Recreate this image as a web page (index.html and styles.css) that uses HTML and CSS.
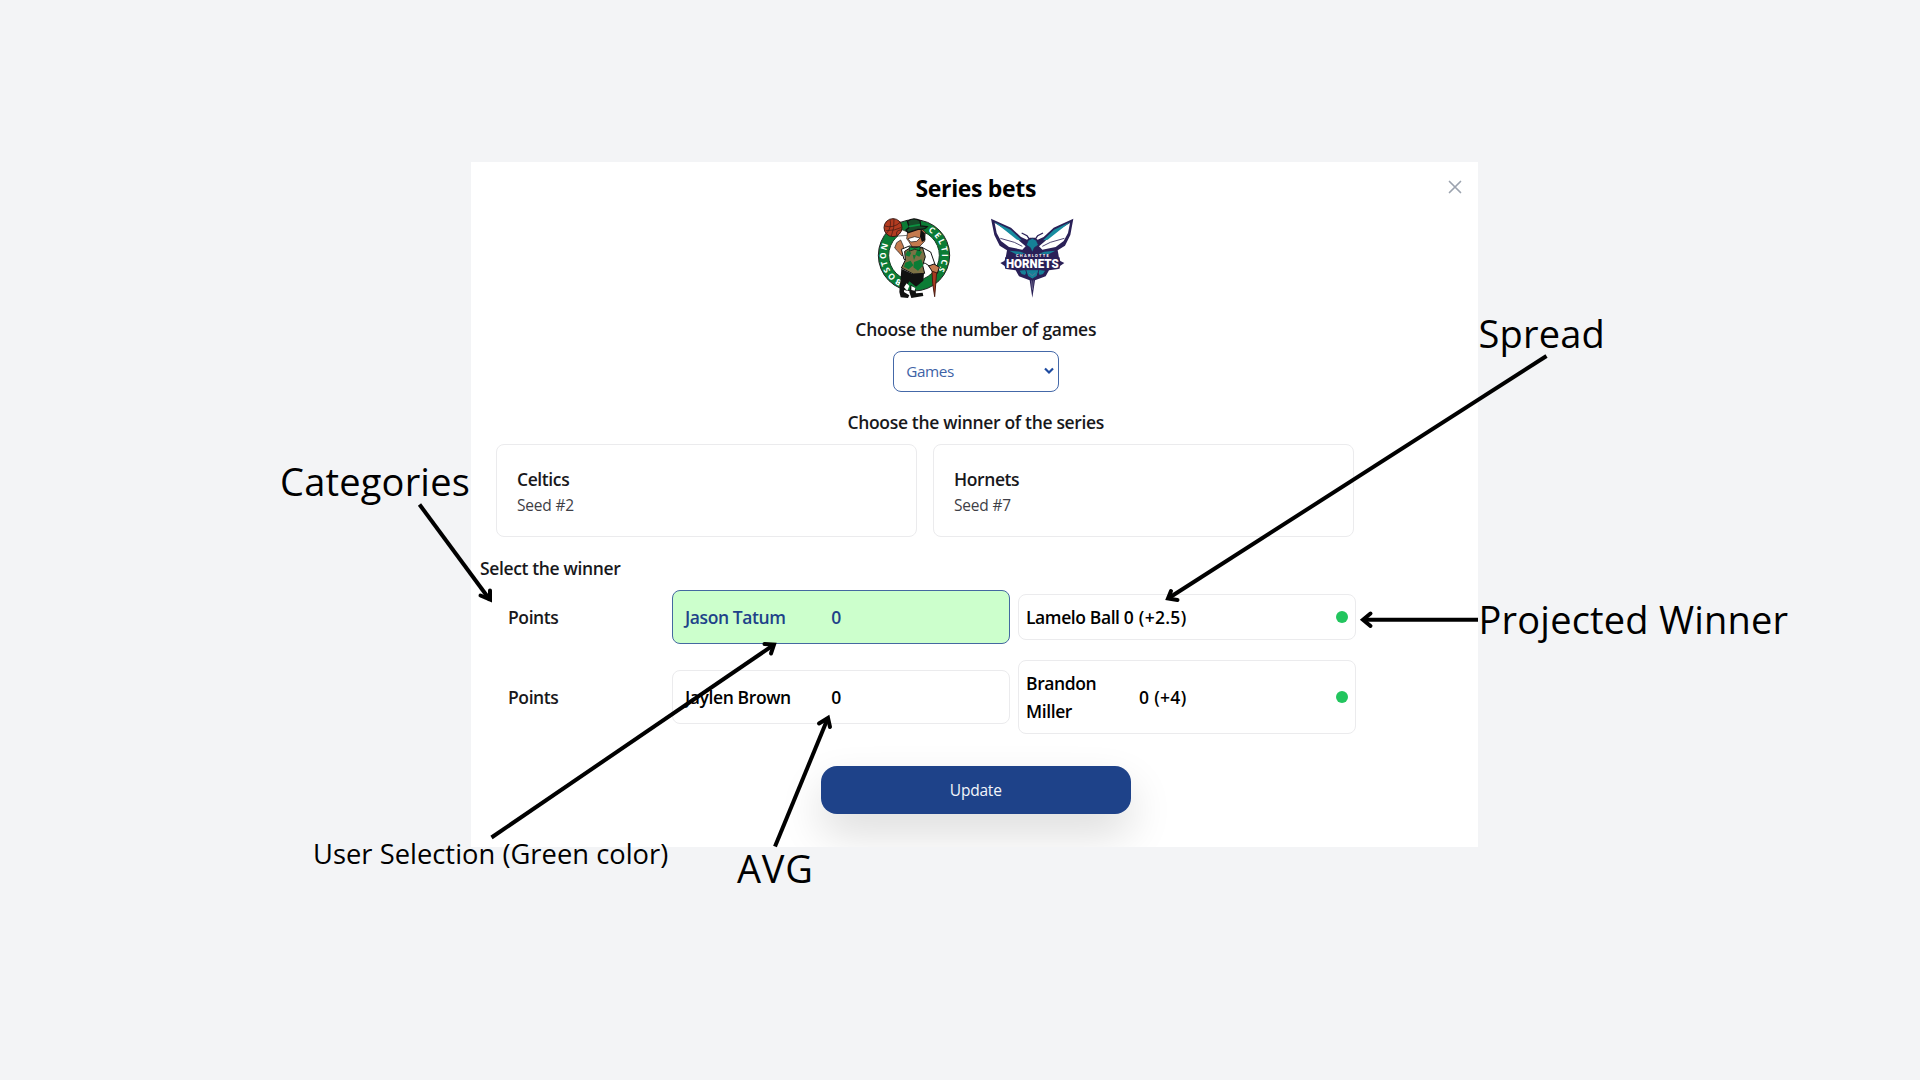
FILE: index.html
```html
<!DOCTYPE html>
<html lang="en">
<head>
<meta charset="utf-8">
<title>Series bets</title>
<link rel="stylesheet" href="styles.css">
</head>
<body>
<main class="modal">
  <button class="close" aria-label="Close">
    <svg width="14" height="14" viewBox="0 0 14 14"><path d="M1.5 1.5l11 11M12.5 1.5l-11 11"/></svg>
  </button>
  <h1 class="title">Series bets</h1>
  <div class="logos">
    <svg width="85" height="90" viewBox="0 0 255 270">
      <circle cx="126" cy="130" r="107" fill="#0b7c35" stroke="#222" stroke-width="3"/>
      <circle cx="126" cy="130" r="76" fill="#fff" stroke="#173f25" stroke-width="3"/>
      <path id="ring" fill="none" d="M126 214A84 84 0 0 1 126 46A84 84 0 0 1 126 214"/>
      <text class="ring-text"><textPath href="#ring" startOffset="36" textLength="130">BOSTON</textPath></text>
      <text class="ring-text"><textPath href="#ring" startOffset="307" textLength="135">CELTICS</textPath></text>
      <path d="M72 58L92 54L112 62L108 70L78 72Z" fill="#fff" stroke="#333" stroke-width="2"/>
      <path d="M74 92L86 84L94 102L98 124L90 132L76 116L68 108Z" fill="#c47a4e" stroke="#111" stroke-width="2"/>
      <path d="M88 112L112 102L150 106L176 120L190 160L178 166L160 154L96 142Z" fill="#fff" stroke="#111" stroke-width="3"/>
      <path d="M98 118L120 104L152 108L160 134L152 160L158 184L124 186L88 168L100 144Z" fill="#7d7145" stroke="#111" stroke-width="3"/>
      <path d="M106 116l12 6-6 12-12-4zM136 112l14 8-8 14-12-6zM100 152l16-6 8 14-14 12-14-8zM126 150l22-8 6 18-16 16-14-10zM122 128l10 2-6 14z" fill="#0b7c35"/>
      <path d="M108 52L140 44L160 60L158 88L142 104L120 104L110 88L104 80Z" fill="#c47a4e" stroke="#111" stroke-width="2"/>
      <path d="M108 80l20-6 16 4-10 10-18 2z" fill="#fff" stroke="#111" stroke-width="2"/>
      <path d="M146 52L158 64L160 84L150 90L144 74Z" fill="#111"/>
      <path d="M106 28Q124 14 144 26L146 42L166 44Q158 54 138 52L108 62L102 54L112 46Z" fill="#164d2a" stroke="#111" stroke-width="4"/>
      <path d="M110 44L144 38" stroke="#0b9040" stroke-width="5"/>
      <path d="M112 104L128 108L144 104L144 116L128 112L112 118Z" fill="#0b9040" stroke="#111" stroke-width="2"/>
      <path d="M88 170L122 186L156 184L154 206L132 224L112 208L98 234L84 222Z" fill="#111"/>
      <path d="M84 212L98 216L96 240L112 250L108 258L86 256L82 240Z" fill="#111"/>
      <path d="M116 218L130 228L132 244L152 242L154 252L118 258L112 240Z" fill="#111"/>
      <path d="M96 226l8-12 8 8-6 14zM118 222l12 6-2 8-10-2z" fill="#fff"/>
      <path d="M170 162L186 156L202 166L196 184L182 180Z" fill="#c47a4e" stroke="#111" stroke-width="3"/>
      <path d="M180 178L194 182L188 254L182 214Z" fill="#a83a20" stroke="#4a1c12" stroke-width="3"/>
      <circle cx="63" cy="47" r="27" fill="#b23b20" stroke="#3a1712" stroke-width="3"/>
      <path d="M38 42Q64 50 86 30M44 64Q60 46 54 22M58 72Q68 48 66 20M42 56Q70 56 89 46M74 70Q70 54 88 54" fill="none" stroke="#3a1712" stroke-width="2"/>
    </svg>
    <svg width="90" height="87" viewBox="380 30 270 261">
      <path d="M392 41L452 68L482 96L500 104L508 98L524 98L532 104L550 96L580 68L639 41L630 90L614 122L592 136L596 158L600 168L612 174L600 182L594 192L566 196L556 214L524 226L516 278L508 226L476 214L466 196L438 192L432 182L420 174L432 168L436 158L440 136L418 122L402 90Z" fill="#2a2057"/>
      <path d="M403 54L448 80L480 110L496 124L486 134L446 126L422 108L409 84Z" fill="#fff"/>
      <path d="M629 54L584 80L552 110L536 124L546 134L586 126L610 108L623 84Z" fill="#fff"/>
      <path d="M401 50L451 74L484 106L470 104L438 79ZM631 50L581 74L548 106L562 104L594 79Z" fill="#178ca0"/>
      <path d="M420 100L462 112L486 124M612 100L570 112L546 124" fill="none" stroke="#2a2057" stroke-width="2.500"/>
      <path d="M484 84L500 92L508 104M548 84L532 92L524 104" fill="none" stroke="#2a2057" stroke-width="4"/>
      <path d="M504 106L516 100L528 106L534 120L522 128L516 142L510 128L498 120Z" fill="#168097" stroke="#2a2057" stroke-width="2"/>
      <path d="M447 137L480 140L496 146L466 147ZM585 137L552 140L536 146L566 147Z" fill="#168097"/>
      <path d="M478 197L502 194L494 210L484 207ZM554 197L530 194L538 210L548 207Z" fill="#168097"/>
      <path d="M496 194L536 194L530 214L516 222L502 214Z" fill="#168097" stroke="#2a2057" stroke-width="3"/>
      <path d="M506 204L516 212L526 204M513 226L516 254L519 226" fill="none" stroke="#7b7799" stroke-width="2"/>
      <rect x="434" y="157" width="164" height="34" fill="#2a2057"/>
      <text x="516" y="155" class="horn-small" textLength="98">CHARLOTTE</text>
      <text x="516" y="188" class="horn-big" textLength="158" lengthAdjust="spacingAndGlyphs">HORNETS</text>
    </svg>
  </div>
  <h2 class="heading">Choose the number of games</h2>
  <div class="select"><span>Games</span>
    <svg width="10" height="8" viewBox="0 0 10 8"><path d="M1 1.5l4 4 4-4"/></svg>
  </div>
  <h2 class="heading winner-heading">Choose the winner of the series</h2>
  <section class="teams">
    <div class="team"><div class="team-name">Celtics</div><div class="seed">Seed #2</div></div>
    <div class="team"><div class="team-name">Hornets</div><div class="seed">Seed #7</div></div>
  </section>
  <h2 class="subheading">Select the winner</h2>
  <section class="bets">
    <div class="category">Points</div>
    <div class="pick home selected"><div class="line"><span>Jason Tatum</span><span class="stat">0</span></div></div>
    <div class="pick away"><div class="line"><span>Lamelo Ball</span><span class="stat">0 (+2.5)</span></div><i class="dot"></i></div>
    <div class="category">Points</div>
    <div class="pick home"><div class="line"><span>Jaylen Brown</span><span class="stat">0</span></div></div>
    <div class="pick away"><div class="line"><span>Brandon<br>Miller</span><span class="stat">0 (+4)</span></div><i class="dot"></i></div>
  </section>
  <button class="update">Update</button>
</main>

<svg class="arrows" width="1920" height="1080" viewBox="0 0 1920 1080">
  <path d="M419.500 504.500L490 600"/><path class="tip" d="M480.500 595.500L490 599.500L490 590.500"/>
  <path d="M1546.500 356L1168 598.500"/><path class="tip" d="M1171 591L1168 598.500L1177.500 600"/>
  <path d="M1478 619.700H1364"/><path class="tip" d="M1370.500 613.500L1363 619.700L1370.500 626"/>
  <path d="M491.500 837.500L773.500 645"/><path class="tip" d="M764.500 644L774 644.500L771 653.500"/>
  <path d="M775 846.500L827.500 719"/><path class="tip" d="M819 723.500L828 718L830 727"/>
</svg>
<span class="note categories">Categories</span>
<span class="note spread">Spread</span>
<span class="note projected">Projected Winner</span>
<span class="note selection">User Selection (Green color)</span>
<span class="note avg">AVG</span>
</body>
</html>
```
FILE: styles.css
```css
* { box-sizing: border-box; }

body {
  margin: 0;
  height: 1080px;
  overflow: hidden;
  position: relative;
  background: #f3f4f6;
  font-family: "Open Sans", "Noto Sans", sans-serif;
  color: #18181b;
}

.modal {
  position: relative;
  width: 1007.5px;
  height: 685px;
  margin: 162px 0 0 470.5px;
  padding: 10px 0 0 3px;
  background: #fff;
  overflow: hidden;
  display: flex;
  flex-direction: column;
  align-items: center;
}

.close {
  position: absolute;
  top: 17.5px;
  right: 16px;
  width: 14px;
  height: 14px;
  padding: 0;
  border: 0;
  background: none;
}
.close svg { display: block; fill: none; stroke: #9ca3af; stroke-width: 1.7; stroke-linecap: round; }

.title {
  margin: 0;
  font-size: 23px;
  line-height: 32px;
  font-weight: 700;
  letter-spacing: -0.35px;
  color: #000;
}

.logos {
  display: flex;
  gap: 30px;
  margin-top: 8px;
  padding-right: 3px;
  height: 90px;
}
.logos svg { flex: none; }
.logos svg + svg { margin-top: 3px; }
.ring-text { font: 700 25px "Open Sans", sans-serif; fill: #fff; }
.horn-small { font: 700 12px "Roboto", sans-serif; fill: #fff; text-anchor: middle; }
.horn-big { font: 900 39px "Roboto", sans-serif; fill: #fff; text-anchor: middle; }

.heading, .subheading {
  margin: 13px 0 0;
  font-size: 17.5px;
  line-height: 28px;
  font-weight: 600;
  letter-spacing: -0.28px;
}
.winner-heading { margin-top: 16px; letter-spacing: -0.33px; }

.select {
  width: 166px;
  height: 41px;
  margin-top: 7.5px;
  padding: 0 4px 0 12.5px;
  border: 1px solid #4468a8;
  border-radius: 8px;
  display: flex;
  align-items: center;
  justify-content: space-between;
  font-size: 15.3px;
  letter-spacing: -0.4px;
  color: #4063a6;
}
.select svg { fill: none; stroke: #1e4ba0; stroke-width: 2.2; }

.teams {
  width: 858px;
  margin: 8.5px 0 0 22.5px;
  display: grid;
  grid-template-columns: 1fr 1fr;
  gap: 16px;
  align-self: flex-start;
}
.team {
  height: 93px;
  padding: 20px 20px 0;
  border: 1px solid #ebebed;
  border-radius: 8px;
}
.team-name { font-size: 17.5px; line-height: 28px; font-weight: 600; letter-spacing: -0.4px; }
.seed { font-size: 15.5px; line-height: 24px; letter-spacing: -0.2px; color: #3f3f46; }

.subheading { align-self: flex-start; margin: 16.5px 0 0 6.5px; letter-spacing: -0.36px; }

.bets {
  align-self: flex-start;
  margin: 8px 0 0 34.5px;
  display: grid;
  grid-template-columns: 155.5px 338px 338px;
  column-gap: 8px;
  row-gap: 16px;
  align-items: center;
  font-size: 17.5px;
  line-height: 28px;
  font-weight: 600;
  letter-spacing: -0.4px;
}
.pick {
  display: flex;
  align-items: center;
  border: 1px solid #ebebed;
  border-radius: 8px;
  color: #000;
}
.home { padding: 12px 12px 12px 12.5px; }
.away { padding: 8px 7px 8px 7.5px; }
.selected { background: #ccffcc; border-color: #4468a0; color: #1e4289; }
.line { width: 156.5px; display: flex; align-items: center; justify-content: space-between; white-space: nowrap; }
.away .line { width: 160.5px; }
.stat { letter-spacing: 0.3px; }
.dot { width: 12px; height: 12px; margin-left: auto; border-radius: 50%; background: #22c55e; }

.update {
  width: 310px;
  height: 48px;
  margin-top: 32px;
  flex: none;
  border: 0;
  border-radius: 16px;
  background: #1e4289;
  box-shadow: 0 20px 44px rgba(0, 0, 0, 0.14);
  font: 400 15.5px "Open Sans", sans-serif;
  letter-spacing: -0.2px;
  color: #f2f5fa;
}

/* Callouts placed over the dialog */
.arrows { position: absolute; left: 0; top: 0; fill: none; stroke: #000; stroke-width: 4; }
.tip { stroke-linecap: round; stroke-linejoin: miter; }
.note {
  position: absolute;
  font-size: 38px;
  line-height: 52px;
  font-weight: 400;
  letter-spacing: 0.2px;
  white-space: nowrap;
  color: #000;
}
.categories { left: 280px; top: 455px; }
.spread { left: 1478.5px; top: 306.5px; }
.projected { left: 1478.5px; top: 592.5px; }
.selection { left: 313px; top: 828px; font-size: 27.3px; letter-spacing: 0.03px; }
.avg { left: 737px; top: 842px; letter-spacing: 0.8px; }
```
